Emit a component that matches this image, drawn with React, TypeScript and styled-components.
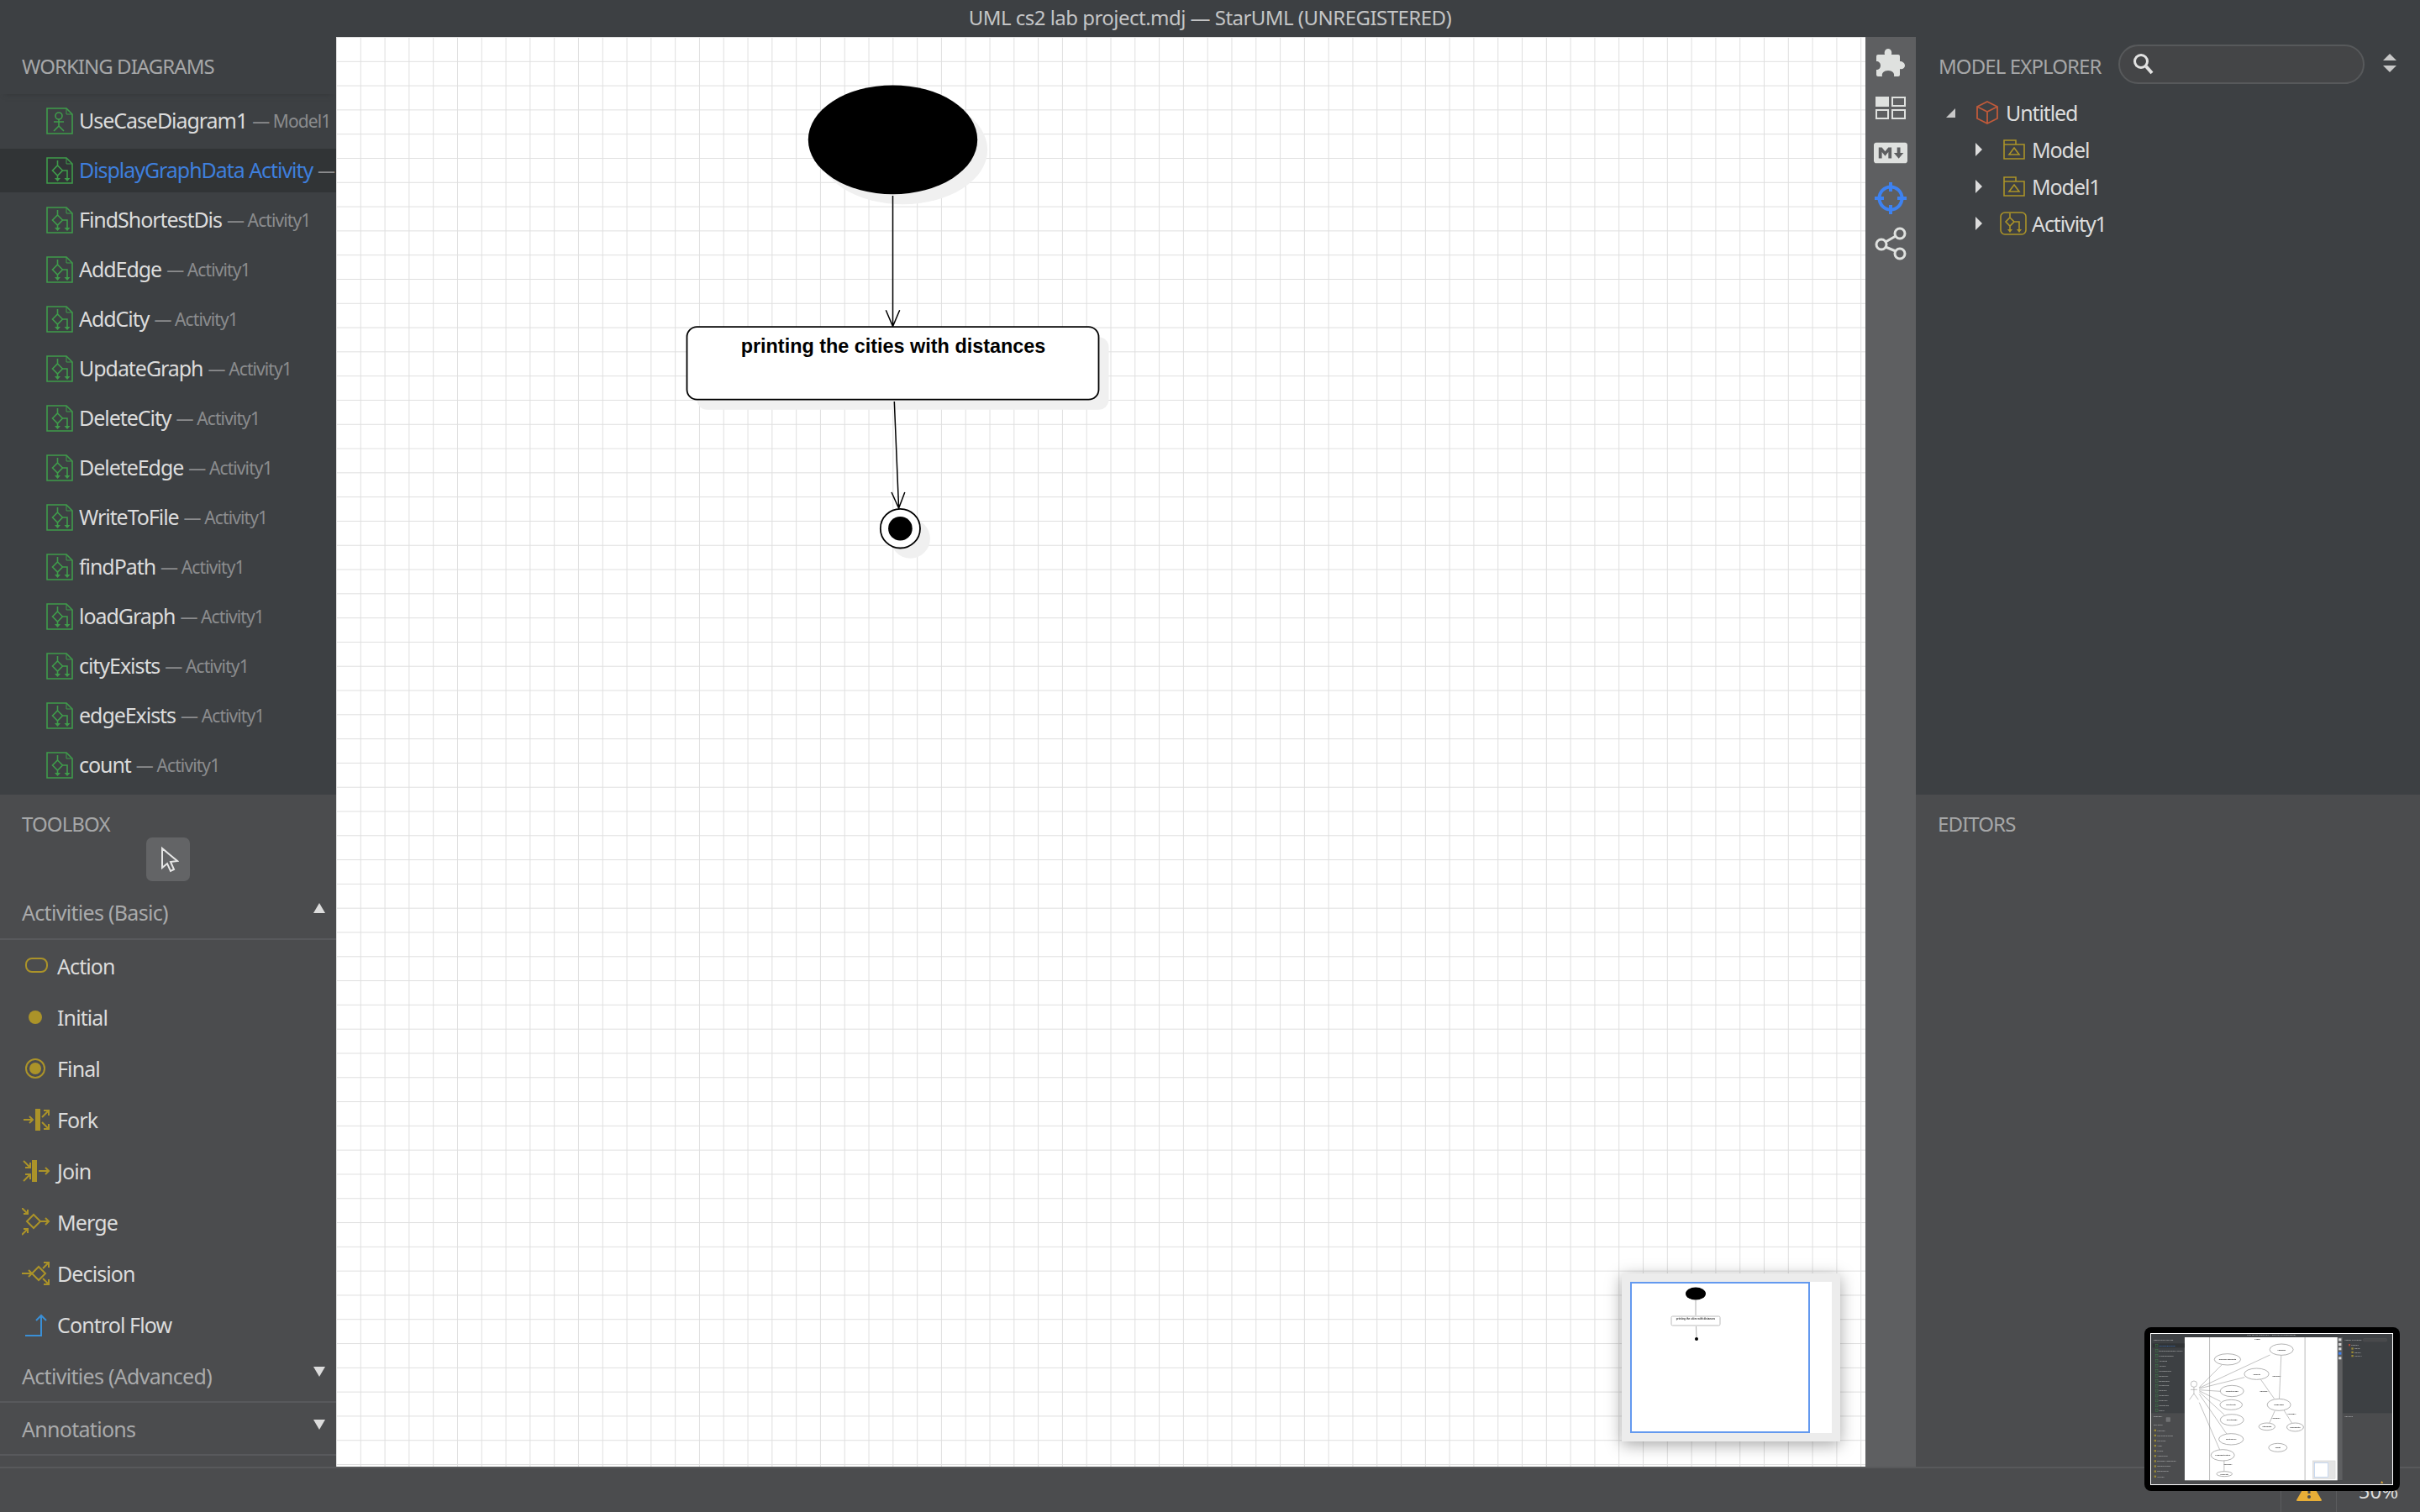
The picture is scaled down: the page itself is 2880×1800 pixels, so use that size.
import React from "react";
import styled, { createGlobalStyle } from "styled-components";
import { FaMarkdown } from "react-icons/fa";

const UI_FONT = `"Noto Sans", "Open Sans", sans-serif`;
const GOLD = "#ab9329";
const GREEN = "#3f9c4b";

const GlobalStyle = createGlobalStyle`
  html, body {
    margin: 0;
    padding: 0;
    width: 2880px;
    height: 1800px;
    overflow: hidden;
    background: #3d4043;
    font-family: ${UI_FONT};
  }
  * { box-sizing: border-box; }
  svg { flex-shrink: 0; }
`;

const WORKING_DIAGRAMS = [
  { name: "UseCaseDiagram1", owner: "Model1", kind: "usecase" },
  { name: "DisplayGraphData Activity", owner: "Activity1", kind: "activity", selected: true },
  { name: "FindShortestDis", owner: "Activity1", kind: "activity" },
  { name: "AddEdge", owner: "Activity1", kind: "activity" },
  { name: "AddCity", owner: "Activity1", kind: "activity" },
  { name: "UpdateGraph", owner: "Activity1", kind: "activity" },
  { name: "DeleteCity", owner: "Activity1", kind: "activity" },
  { name: "DeleteEdge", owner: "Activity1", kind: "activity" },
  { name: "WriteToFile", owner: "Activity1", kind: "activity" },
  { name: "findPath", owner: "Activity1", kind: "activity" },
  { name: "loadGraph", owner: "Activity1", kind: "activity" },
  { name: "cityExists", owner: "Activity1", kind: "activity" },
  { name: "edgeExists", owner: "Activity1", kind: "activity" },
  { name: "count", owner: "Activity1", kind: "activity" },
];

const TOOLS = ["Action", "Initial", "Final", "Fork", "Join", "Merge", "Decision", "Control Flow"];

function DiagramIcon({ kind }: { kind: string }): JSX.Element {
  return (
    <svg width="32" height="32" viewBox="0 0 32 32" fill="none" stroke={GREEN} strokeWidth="1.6">
      <path d="M1 1 H24 L31 8 V31 H1 Z" />
      <path d="M24 1 V8 H31" strokeWidth="1" />
      {kind === "usecase" ? (
        <>
          <circle cx="15" cy="10" r="4" />
          <path d="M15 14 V22 M9 17 H21 M15 22 L9 28 M15 22 L21 28" />
        </>
      ) : (
        <>
          <path d="M13.5 4 V10 M13.5 10 L19.5 16 L13.5 22 L7.5 16 Z M13.5 22 V27 M19.5 16 H25 V27" />
          <path d="M10 25 H17 L13.5 29 Z M21.5 25 H28.5 L25 29 Z" fill={GREEN} stroke="none" />
        </>
      )}
    </svg>
  );
}

function ToolIcon({ name }: { name: string }): JSX.Element {
  return (
    <svg width="34" height="34" viewBox="0 0 34 34" fill="none" stroke={GOLD} strokeWidth="2">
      {name === "Action" && <rect x="5" y="8" width="25" height="16" rx="7" />}
      {name === "Initial" && <circle cx="16" cy="17" r="8" fill={GOLD} stroke="none" />}
      {name === "Final" && (
        <>
          <circle cx="16" cy="17" r="11" />
          <circle cx="16" cy="17" r="7" fill={GOLD} stroke="none" />
        </>
      )}
      {name === "Fork" && (
        <>
          <path d="M2 17 H13 M9 13 L13 17 L9 21" />
          <rect x="16" y="4" width="6" height="26" fill={GOLD} stroke="none" />
          <path d="M24 14 L32 6 M26 6 H32 V12 M24 20 L32 28 M32 22 V28 H26" />
        </>
      )}
      {name === "Join" && (
        <>
          <path d="M2 5 L10 13 M10 7 V13 H4 M2 29 L10 21 M4 21 H10 V27" />
          <rect x="12" y="4" width="6" height="26" fill={GOLD} stroke="none" />
          <path d="M20 17 H32 M28 13 L32 17 L28 21" />
        </>
      )}
      {name === "Merge" && (
        <>
          <path d="M14 8 L22 16 L14 24 L6 16 Z M22 16 H32 M28 12 L32 16 L28 20" />
          <path d="M0 0 L7 7 M7 2 V7 H2 M0 32 L7 25 M2 25 H7 V30" />
        </>
      )}
      {name === "Decision" && (
        <>
          <path d="M0 17 H12 M8 13 L12 17 L8 21 M20 9 L28 17 L20 25 L12 17 Z" />
          <path d="M25 11 L32 4 M26 4 H32 V10 M25 23 L32 30 M32 24 V30 H26" />
        </>
      )}
      {name === "Control Flow" && (
        <path d="M4 30 H23 V6 M17 12 L23 6 L29 12" stroke="#3a8fd6" />
      )}
    </svg>
  );
}

function PackageIcon(): JSX.Element {
  return (
    <svg width="26" height="24" viewBox="0 0 26 24" fill="none" stroke={GOLD} strokeWidth="1.6">
      <path d="M1 6 V23 H25 V6 H1 M1 6 V1 H15 V6" />
      <path d="M13 10 L19 18 H7 Z" />
    </svg>
  );
}

function DiagramCanvas(): JSX.Element {
  return (
    <DiagramSvg viewBox="400 44 1820 1702">
      <ellipse cx="1074.5" cy="178.3" rx="100.7" ry="64.9" fill="#f0f0f0" />
      <ellipse cx="1062.5" cy="166.3" rx="100.7" ry="64.9" fill="#000" />
      <rect x="829.5" y="401.2" width="490" height="86.5" rx="12" fill="#f0f0f0" />
      <path d="M1062.5 233 V388.5 M1054.3 369.3 L1062.5 388.5 L1070.7 369.3" stroke="#000" strokeWidth="1.5" fill="none" />
      <rect x="817.5" y="389.2" width="490" height="86.5" rx="12" fill="#fff" stroke="#000" strokeWidth="1.8" />
      <ActionLabel x="1063" y="420" textAnchor="middle">printing the cities with distances</ActionLabel>
      <path d="M1064.3 478 L1069.6 605 M1061 586 L1069.6 605 L1076.8 586" stroke="#000" strokeWidth="1.5" fill="none" />
      <circle cx="1083.4" cy="641.2" r="23.5" fill="#f0f0f0" />
      <ellipse cx="1071.4" cy="629.2" rx="23.6" ry="23.3" fill="#fff" stroke="#000" strokeWidth="1.8" />
      <circle cx="1071.4" cy="629.2" r="14.3" fill="#000" />
    </DiagramSvg>
  );
}

function Minimap(): JSX.Element {
  return (
    <MinimapFrame>
      <MinimapPage>
        <MinimapSvg viewBox="0 0 240 180">
          <rect width="214" height="180" fill="#fff" />
          <ellipse cx="78" cy="14" rx="12" ry="7.5" fill="#000" />
          <path d="M78 21 V40 M78.5 53 L79 66" stroke="#999" strokeWidth="0.8" />
          <rect x="49" y="41" width="58" height="11" rx="1.5" fill="#fff" stroke="#bbb" />
          <MinimapLabel x="78" y="45" textAnchor="middle">printing the cities with distances</MinimapLabel>
          <circle cx="79" cy="68" r="2" fill="#000" />
        </MinimapSvg>
        <MinimapViewport />
      </MinimapPage>
    </MinimapFrame>
  );
}

const USE_CASES: [number, number, number, number, string][] = [
  [333, 146, 47, 20, "DisplayGraphData"],
  [526, 111, 42, 20, "AddEdge"],
  [437, 198, 44, 20, "AddCity"],
  [349, 259, 42, 20, "UpdateGraph"],
  [346, 308, 40, 18, "DeleteCity"],
  [349, 362, 42, 20, "DeleteEdge"],
  [346, 431, 44, 20, "WriteToFile"],
  [316, 488, 42, 20, "FindShortestDis"],
  [517, 308, 42, 21, "loadGraph"],
  [474, 386, 29, 13, "cityExists"],
  [575, 388, 30, 15, "edgeExists"],
  [513, 461, 33, 15, "count"],
  [322, 555, 28, 9, "findPath"],
];

const THUMB_TOOLS = [
  "Package", "Use Case Subject", "Use Case", "Actor", "Frame",
  "Association", "Directed Association", "Generalization", "Dependency", "Include",
];

const THUMB_INCLUDES: [number, number][] = [
  [508, 208], [463, 261], [507, 358], [563, 342], [335, 524],
];

function ScreenshotThumb(): JSX.Element {
  return (
    <ThumbFrame>
      <ThumbSvg viewBox="60 55 862 537" preserveAspectRatio="none">
        <rect x="60" y="55" width="862" height="537" fill="#3d4043" />
        <rect x="60" y="338" width="120" height="254" fill="#4b4c4e" />
        <rect x="744" y="338" width="178" height="254" fill="#4b4c4e" />
        <rect x="726" y="67" width="18" height="511" fill="#5e5f61" />
        <rect x="60" y="578" width="862" height="14" fill="#4b4c4e" />
        <rect x="180" y="67" width="546" height="511" fill="#fff" />
        <path d="M269 67 V578 M610 67 V578" stroke="#999" strokeWidth="2" />
        <rect x="65" y="89" width="115" height="15" fill="#313436" />
        <ThumbUiText x="490" y="62" textAnchor="middle">UML cs2 lab project.mdj — StarUML (UNREGISTERED)</ThumbUiText>
        <ThumbUiText x="68" y="80">WORKING DIAGRAMS</ThumbUiText>
        {WORKING_DIAGRAMS.map((d, i) => (
          <g key={d.name}>
            <rect x="76" y={93 + i * 17.8} width="8" height="9" fill="none" stroke={GREEN} />
            <ThumbUiText x="88" y={100 + i * 17.8} $accent={i === 0}>{d.name}</ThumbUiText>
          </g>
        ))}
        <ThumbUiText x="68" y="351">TOOLBOX</ThumbUiText>
        <rect x="113" y="353" width="16" height="16" rx="2" fill="#707173" />
        <ThumbUiText x="68" y="383">Use Cases</ThumbUiText>
        {THUMB_TOOLS.map((t, i) => (
          <g key={t}>
            <rect x="71" y={396 + i * 18.3} width="7" height="7" fill="#9a8a35" />
            <ThumbUiText x="82" y={402 + i * 18.3}>{t}</ThumbUiText>
          </g>
        ))}
        <ThumbUiText x="752" y="80">MODEL EXPLORER</ThumbUiText>
        <rect x="818" y="71" width="85" height="11" rx="5" fill="#47484a" stroke="#5a5b5d" />
        <ThumbUiText x="775" y="97">Untitled</ThumbUiText>
        <rect x="766" y="91" width="6" height="7" fill="#b04a35" />
        {["Model", "Model1", "Activity1"].map((t, i) => (
          <g key={t}>
            <rect x="776" y={104 + i * 13} width="7" height="7" fill="#9a8a35" />
            <ThumbUiText x="786" y={110 + i * 13}>{t}</ThumbUiText>
          </g>
        ))}
        <ThumbUiText x="752" y="351">EDITORS</ThumbUiText>
        {[75, 92, 108, 124, 141].map((y, i) => (
          <rect key={y} x="730" y={y - 4} width="10" height="9" fill={i === 3 ? "#3e82f0" : "#d5d5d5"} />
        ))}
        <ThumbLabel x="440" y="75" textAnchor="middle">Graph</ThumbLabel>
        <g stroke="#8c8c8c" strokeWidth="1.6" fill="none">
          <circle cx="213" cy="234" r="11" />
          <path d="M213 245 V268 M201 254 H225 M213 268 L197 290 M213 268 L229 290" />
          <path d="M232 246 L312 166 M232 248 L485 130 M232 250 L394 210 M232 255 L307 260 M232 258 L308 296 M232 262 L322 344 M232 270 L330 412 M232 300 L305 468" />
          <path d="M525 131 L518 286 M500 286 L452 218 M502 330 L483 373 M535 328 L563 373 M321 508 L321 546" />
          <rect x="638" y="508" width="80" height="64" fill="#e4e4e4" stroke="#d0d0d0" />
          <rect x="644" y="516" width="48" height="50" fill="#fff" stroke="#a4c4f0" />
        </g>
        {USE_CASES.map(([cx, cy, rx, ry, label]) => (
          <g key={label}>
            <ellipse cx={cx} cy={cy} rx={rx} ry={ry} fill="#fff" stroke="#a0a0a0" strokeWidth="2.4" />
            <ThumbLabel x={cx} y={cy + 3} textAnchor="middle">{label}</ThumbLabel>
          </g>
        ))}
        {THUMB_INCLUDES.map(([x, y]) => (
          <ThumbLabel key={x} x={x} y={y} textAnchor="middle">«include»</ThumbLabel>
        ))}
        <path d="M880 588 L885 580 L890 588 Z" fill="#e8ae37" />
      </ThumbSvg>
    </ThumbFrame>
  );
}

export default function App(): JSX.Element {
  return (
    <Shell>
      <GlobalStyle />
      <TitleBar>UML cs2 lab project.mdj — StarUML (UNREGISTERED)</TitleBar>

      <SidePanel>
        <UpperPane>
          <PaneTitle>WORKING DIAGRAMS</PaneTitle>
          <DiagramList>
            {WORKING_DIAGRAMS.map((d) => (
              <DiagramRow key={d.name} $selected={d.selected}>
                <DiagramIcon kind={d.kind} />
                <DiagramName $selected={d.selected}>{d.name}</DiagramName>
                <DiagramOwner>— {d.owner}</DiagramOwner>
              </DiagramRow>
            ))}
          </DiagramList>
        </UpperPane>
        <LowerPane>
          <ToolboxTitle>TOOLBOX</ToolboxTitle>
          <CursorRow>
            <CursorButton>
              <svg width="24" height="32" viewBox="0 0 24 32" fill="none" stroke="#e6e6e6" strokeWidth="2">
                <path d="M4 3 V26 L10 21 L14 30 L18 28 L14 19 L22 18 Z" />
              </svg>
            </CursorButton>
          </CursorRow>
          <GroupHeader $first>
            Activities (Basic)
            <Caret $up />
          </GroupHeader>
          {TOOLS.map((t) => (
            <ToolRow key={t}>
              <ToolIcon name={t} />
              {t}
            </ToolRow>
          ))}
          <GroupHeader>
            Activities (Advanced)
            <Caret />
          </GroupHeader>
          <GroupHeader>
            Annotations
            <Caret />
          </GroupHeader>
        </LowerPane>
      </SidePanel>

      <Canvas>
        <DiagramCanvas />
        <Minimap />
      </Canvas>

      <ToolStrip>
        <StripButton>
          <svg width="34" height="33" viewBox="0 0 34 33" fill="#dfe1df">
            <path d="M2 7 H10 C9 3 11 0 14 0 C17 0 19 3 18 7 H26 Q28 7 28 9 V15 C31 15 34 17 34 20 C34 23 31 25 28 24 V31 Q28 33 26 33 H21 C22 29 19 26 14 26 C9 26 6 29 7 33 H2 Q0 33 0 31 V25 C3 25 5 23 5 20 C5 17 3 15 0 15 V9 Q0 7 2 7 Z" />
          </svg>
        </StripButton>
        <StripButton>
          <svg width="36" height="27" viewBox="0 0 36 27" fill="none" stroke="#dfe1df" strokeWidth="2">
            <rect x="0" y="0" width="16" height="12" fill="#dfe1df" stroke="none" />
            <rect x="20" y="1" width="15" height="10" />
            <rect x="1" y="16" width="14" height="10" />
            <rect x="20" y="16" width="15" height="10" />
          </svg>
        </StripButton>
        <StripButton><FaMarkdown size={40} color="#dfe1df" /></StripButton>
        <StripButton>
          <svg width="38" height="38" viewBox="0 0 38 38" fill="none" stroke="#3e82f0" strokeWidth="4">
            <circle cx="19" cy="19" r="13.5" />
            <path d="M19 0 V11 M19 27 V38 M0 19 H11 M27 19 H38" />
          </svg>
        </StripButton>
        <StripButton>
          <svg width="38" height="40" viewBox="0 0 38 40" fill="none" stroke="#dfe1df" strokeWidth="3">
            <circle cx="30" cy="8" r="6" />
            <circle cx="8" cy="21" r="6" />
            <circle cx="30" cy="32" r="6" />
            <path d="M25 11 L13 18 M13 24 L25 29" />
          </svg>
        </StripButton>
      </ToolStrip>

      <SidePanel>
        <UpperPane>
          <ExplorerHeader>
            <PaneLabel>MODEL EXPLORER</PaneLabel>
            <SearchBox>
              <svg width="26" height="28" viewBox="0 0 26 28" fill="none" stroke="#e2e2e2" strokeWidth="3">
                <circle cx="10" cy="11" r="7.5" />
                <path d="M16 17 L23 25" strokeWidth="4" />
              </svg>
            </SearchBox>
            <SortArrows>
              <SortArrow $up />
              <SortArrow />
            </SortArrows>
          </ExplorerHeader>
          <Tree>
            <TreeRow $depth={0}>
              <TreeCaret $open />
              <svg width="28" height="30" viewBox="0 0 28 30" fill="none" stroke="#c05a3a" strokeWidth="1.8">
                <path d="M14 2 L26 8 V22 L14 28 L2 22 V8 Z M2 8 L14 14 L26 8 M14 14 V28" />
              </svg>
              <TreeLabel>Untitled</TreeLabel>
            </TreeRow>
            <TreeRow $depth={1}>
              <TreeCaret />
              <PackageIcon />
              <TreeLabel>Model</TreeLabel>
            </TreeRow>
            <TreeRow $depth={1}>
              <TreeCaret />
              <PackageIcon />
              <TreeLabel>Model1</TreeLabel>
            </TreeRow>
            <TreeRow $depth={1}>
              <TreeCaret $tight />
              <svg width="32" height="28" viewBox="0 0 32 28" fill="none" stroke={GOLD} strokeWidth="1.6">
                <rect x="1" y="1" width="30" height="26" rx="5" />
                <path d="M12 2 V7 M12 7 L17 12 L12 17 L7 12 Z M12 17 V22 M17 12 H23 V22" />
                <path d="M9 21 H15 L12 25 Z M20 21 H26 L23 25 Z" fill={GOLD} stroke="none" />
              </svg>
              <TreeLabel $near>Activity1</TreeLabel>
            </TreeRow>
          </Tree>
        </UpperPane>
        <LowerPane>
          <ToolboxTitle>EDITORS</ToolboxTitle>
        </LowerPane>
      </SidePanel>

      <StatusBar>
        <StatusCell $width={66}>
          <svg width="30" height="26" viewBox="0 0 30 26">
            <path d="M15 1 L29 25 H1 Z" fill="#e8ae37" stroke="#e8ae37" strokeWidth="2" strokeLinejoin="round" />
            <rect x="13.5" y="8" width="3" height="9" fill="#4b4c4e" />
            <circle cx="15" cy="21" r="2" fill="#4b4c4e" />
          </svg>
        </StatusCell>
        <StatusCell $width={100}>50%</StatusCell>
        <ScreenshotThumb />
      </StatusBar>
    </Shell>
  );
}

const Shell = styled.div`
  position: relative;
  width: 2880px;
  height: 1800px;
  display: grid;
  grid-template-columns: 400px 1820px 60px 600px;
  grid-template-rows: 44px 1702px 54px;
  color: #dcdcdc;
  overflow: hidden;
`;

const TitleBar = styled.div`
  grid-column: 1 / -1;
  padding-bottom: 3px;
  display: flex;
  align-items: center;
  justify-content: center;
  background: #3d4043;
  color: #c4c5c6;
  font-size: 24px;
  letter-spacing: -0.53px;
`;

const SidePanel = styled.div`
  display: flex;
  flex-direction: column;
  min-width: 0;
  overflow: hidden;
`;

const UpperPane = styled.div`
  height: 902px;
  background: #3d4043;
`;

const LowerPane = styled.div`
  flex: 1;
  background: #4b4c4e;
  padding-top: 17px;
`;

const PaneTitle = styled.div`
  height: 68px;
  padding-left: 26px;
  display: flex;
  align-items: center;
  color: #a6a7a8;
  font-size: 24px;
  letter-spacing: -0.95px;
  box-shadow: 0 6px 6px -6px #343638;
`;

const DiagramList = styled.div`
  padding-top: 6px;
`;

const DiagramRow = styled.div<{ $selected?: boolean }>`
  height: 52px;
  margin-bottom: 7px;
  padding-left: 55px;
  display: flex;
  align-items: center;
  white-space: nowrap;
  overflow: hidden;
  background: ${(p) => (p.$selected ? "#313436" : "transparent")};
`;

const DiagramName = styled.span<{ $selected?: boolean }>`
  margin: -2px 0 0 7px;
  font-size: 25px;
  letter-spacing: -1.05px;
  color: ${(p) => (p.$selected ? "#3e7fdd" : "#dcdcdc")};
`;

const DiagramOwner = styled.span`
  margin-left: 6px;
  font-size: 21px;
  letter-spacing: -0.9px;
  color: #8b8c8e;
`;

const ToolboxTitle = styled.div`
  height: 34px;
  padding-left: 26px;
  display: flex;
  align-items: center;
  color: #a6a7a8;
  font-size: 24px;
  letter-spacing: -0.9px;
`;

const CursorRow = styled.div`
  display: flex;
  justify-content: center;
`;

const CursorButton = styled.div`
  width: 52px;
  height: 52px;
  padding-left: 15px;
  border-radius: 7px;
  background: #636466;
  display: flex;
  align-items: center;
`;

const GroupHeader = styled.div<{ $first?: boolean }>`
  height: ${(p) => (p.$first ? "70px" : "63px")};
  padding: ${(p) => (p.$first ? "6px" : "0")} 13px 0 26px;
  border-bottom: 2px solid #58595c;
  display: flex;
  align-items: center;
  justify-content: space-between;
  color: #a9aaab;
  font-size: 25px;
  letter-spacing: -0.7px;
`;

const Caret = styled.span<{ $up?: boolean }>`
  width: 0;
  height: 0;
  margin-top: -10px;
  border-left: 7px solid transparent;
  border-right: 7px solid transparent;
  ${(p) =>
    p.$up ? "border-bottom: 12px solid #dcdcdc;" : "border-top: 12px solid #dcdcdc;"}
`;

const ToolRow = styled.div`
  height: 61px;
  padding-left: 26px;
  display: flex;
  align-items: center;
  gap: 8px;
  color: #dcdcdc;
  font-size: 25px;
  letter-spacing: -0.9px;
`;

const Canvas = styled.div`
  position: relative;
  background-color: #fff;
  background-image:
    linear-gradient(to right, #dfdfdf 1px, transparent 1px),
    linear-gradient(to bottom, #dfdfdf 1px, transparent 1px);
  background-size: 28.8px 28.8px;
  overflow: hidden;
`;

const DiagramSvg = styled.svg`
  display: block;
  width: 100%;
  height: 100%;
`;

const ActionLabel = styled.text`
  font-family: "Liberation Sans", Arial, sans-serif;
  font-weight: 700;
  font-size: 23.4px;
  fill: #000;
`;

const MinimapFrame = styled.div`
  position: absolute;
  left: 1530px;
  top: 1472px;
  width: 260px;
  height: 200px;
  padding: 10px;
  background: #ececec;
  box-shadow: 0 4px 18px rgba(0, 0, 0, 0.35);
`;

const MinimapPage = styled.div`
  position: relative;
  width: 240px;
  height: 180px;
  background: #fff;
`;

const MinimapSvg = styled.svg`
  display: block;
  width: 240px;
  height: 180px;
  filter: blur(0.4px);
`;

const MinimapLabel = styled.text`
  font-family: "Liberation Sans", Arial, sans-serif;
  font-weight: 700;
  font-size: 3px;
  fill: #333;
`;

const MinimapViewport = styled.div`
  position: absolute;
  left: 0;
  top: 0;
  width: 214px;
  height: 180px;
  border: 2px solid #6399ef;
`;

const ToolStrip = styled.div`
  background: #5e5f61;
  display: flex;
  flex-direction: column;
  align-items: center;
  padding-top: 3px;
`;

const StripButton = styled.div`
  height: 54px;
  display: flex;
  align-items: center;
  justify-content: center;
`;

const ExplorerHeader = styled.div`
  height: 68px;
  padding-left: 27px;
  display: flex;
  align-items: center;
`;

const PaneLabel = styled.div`
  width: 214px;
  color: #a6a7a8;
  font-size: 24px;
  letter-spacing: -0.9px;
  white-space: nowrap;
`;

const SearchBox = styled.div`
  width: 293px;
  height: 47px;
  margin-top: -4px;
  padding-left: 15px;
  border: 2px solid #57595b;
  border-radius: 24px;
  background: #444547;
  display: flex;
  align-items: center;
`;

const SortArrows = styled.div`
  margin-left: 22px;
  margin-top: -6px;
  display: flex;
  flex-direction: column;
  gap: 6px;
`;

const SortArrow = styled.span<{ $up?: boolean }>`
  width: 0;
  height: 0;
  border-left: 8px solid transparent;
  border-right: 8px solid transparent;
  ${(p) =>
    p.$up ? "border-bottom: 8px solid #c8c8c8;" : "border-top: 8px solid #c8c8c8;"}
`;

const Tree = styled.div`
  padding-top: 0;
`;

const TreeRow = styled.div<{ $depth: number }>`
  height: 44px;
  padding-left: ${(p) => 36 + p.$depth * 35}px;
  display: flex;
  align-items: center;
`;

const TreeCaret = styled.span<{ $open?: boolean; $tight?: boolean }>`
  width: 0;
  height: 0;
  margin-right: ${(p) => (p.$open ? "24px" : p.$tight ? "21px" : "25px")};
  ${(p) =>
    p.$open
      ? "border-bottom: 11px solid #c8c8c8; border-left: 11px solid transparent;"
      : "border-top: 8px solid transparent; border-bottom: 8px solid transparent; border-left: 8px solid #dcdcdc;"}
`;

const TreeLabel = styled.span<{ $near?: boolean }>`
  margin-left: ${(p) => (p.$near ? "6px" : "8px")};
  color: #dcdcdc;
  font-size: 25px;
  letter-spacing: -1.1px;
`;

const StatusBar = styled.div`
  grid-column: 1 / -1;
  position: relative;
  display: flex;
  justify-content: flex-end;
  background: #4b4c4e;
  border-top: 2px solid #58595b;
`;

const StatusCell = styled.div<{ $width: number }>`
  width: ${(p) => p.$width}px;
  border-left: 1px solid #5b5c5e;
  display: flex;
  align-items: center;
  justify-content: center;
  color: #dcdcdc;
  font-size: 24px;
`;

const ThumbFrame = styled.div`
  position: absolute;
  left: 2552px;
  bottom: 25px;
  width: 304px;
  height: 195px;
  padding: 8px 9px 8px 8px;
  border-radius: 8px;
  background: #000;
`;

const ThumbSvg = styled.svg`
  display: block;
  width: 287px;
  height: 179px;
  outline: 1px solid #fff;
  filter: blur(0.35px);
`;

const ThumbLabel = styled.text`
  font-family: "Liberation Sans", Arial, sans-serif;
  font-weight: 700;
  font-size: 7px;
  fill: #222;
`;

const ThumbUiText = styled.text<{ $accent?: boolean }>`
  font-family: "Noto Sans", sans-serif;
  font-size: 7px;
  fill: ${(p) => (p.$accent ? "#3e7fdd" : "#c2c3c4")};
`;
